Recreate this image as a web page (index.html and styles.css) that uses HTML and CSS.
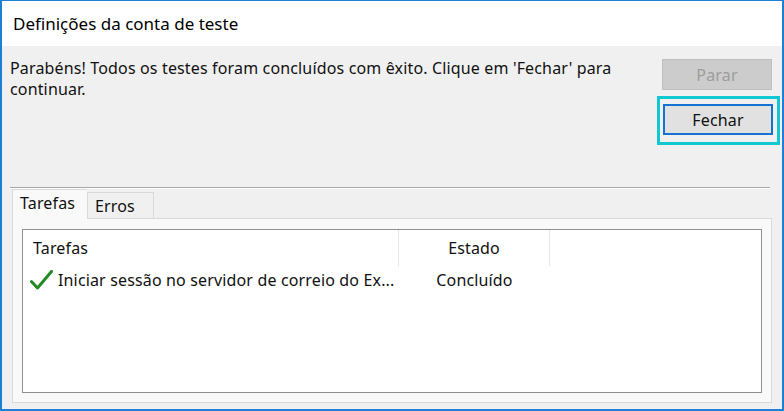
FILE: index.html
```html
<!DOCTYPE html>
<html lang="pt">
<head>
<meta charset="utf-8">
<title>Definições da conta de teste</title>
<link rel="stylesheet" href="styles.css">
</head>
<body>
<div class="window">
  <div class="titlebar">Definições da conta de teste</div>
  <div class="content">
    <div class="top">
      <p class="message">Parabéns! Todos os testes foram concluídos com êxito. Clique em 'Fechar' para continuar.</p>
      <div class="buttons">
        <button class="btn btn-disabled" disabled>Parar</button>
        <div class="highlight">
          <button class="btn btn-default">Fechar</button>
        </div>
      </div>
    </div>
    <div class="separator"></div>
    <div class="tabs">
      <div class="tab tab-active">Tarefas</div>
      <div class="tab">Erros</div>
    </div>
    <div class="panel">
      <div class="list">
        <div class="list-header">
          <div class="col col-task">Tarefas</div>
          <div class="col col-state">Estado</div>
          <div class="col col-rest"></div>
        </div>
        <div class="list-row">
          <div class="col col-task">
            <svg class="check" width="23" height="20" viewBox="0 0 23 20"><path d="M1.5 11.5 L7.5 18 L21.5 1.5" fill="none" stroke="#238a23" stroke-width="3" stroke-linecap="round" stroke-linejoin="round"/></svg>
            <span>Iniciar sessão no servidor de correio do Ex...</span>
          </div>
          <div class="col col-state">Concluído</div>
        </div>
      </div>
    </div>
  </div>
</div>
</body>
</html>
```
FILE: styles.css
```css
html, body {
  margin: 0;
  padding: 0;
  background: #ffffff;
}
body {
  font-family: "Noto Sans", "Open Sans", sans-serif;
  color: #111111;
}
.window {
  width: 784px;
  height: 411px;
  box-sizing: border-box;
  border-left: 2px solid #1f7fd4;
  border-right: 2px solid #1f7fd4;
  border-bottom: 2px solid #1f7fd4;
  border-top: 1px solid #1f7fd4;
  display: flex;
  flex-direction: column;
  overflow: hidden;
}
.titlebar {
  height: 45px;
  background: #ffffff;
  font-size: 17px;
  line-height: 45px;
  padding-left: 11px;
  color: #000;
  flex: none;
}
.content {
  flex: 1;
  background: #f0f0f0;
  display: flex;
  flex-direction: column;
}
.top {
  display: flex;
  height: 140px;
  flex: none;
}
.message {
  flex: 1;
  margin: 0;
  padding: 12px 30px 0 8px;
  font-size: 16px;
  letter-spacing: 0.15px;
  line-height: 21px;
}
.buttons {
  width: 123px;
  margin-right: 2px;
  display: flex;
  flex-direction: column;
  align-items: flex-start;
  padding-top: 13px;
  box-sizing: border-box;
}
.btn {
  width: 110px;
  height: 31px;
  font-family: inherit;
  font-size: 16px;
  letter-spacing: 0.15px;
  padding: 0;
  box-sizing: border-box;
  border-radius: 0;
}
.btn-disabled {
  margin-left: 5px;
  background: #cccccc;
  border: 1px solid #bfbfbf;
  color: #9d9d9d;
}
.highlight {
  margin-top: 6px;
  width: 123px;
  height: 49px;
  box-sizing: border-box;
  border: 3px solid #12c8d0;
  padding: 5px 0 0 3px;
}
.btn-default {
  background: #e1e1e1;
  border: 2px solid #1473d2;
  color: #111111;
}
.separator {
  margin: 1px 12px 0 8px;
  height: 1px;
  background: #a8a8a8;
  border-bottom: 1px solid #ffffff;
  flex: none;
}
.tabs {
  display: flex;
  align-items: flex-end;
  padding-left: 10px;
  height: 29px;
  flex: none;
}
.tab {
  font-size: 16px;
  letter-spacing: 0.15px;
  box-sizing: border-box;
  height: 26px;
  width: 67px;
  border: 1px solid #d9d9d9;
  border-bottom: none;
  background: #f0f0f0;
  padding-left: 7px;
  line-height: 26px;
}
.tab-active {
  height: 30px;
  width: 75px;
  background: #f9f9f9;
  border-right: none;
  padding-left: 7px;
  line-height: 26px;
  position: relative;
  z-index: 1;
  margin-bottom: -1px;
}
.panel {
  margin: 0 10px;
  height: 185px;
  box-sizing: border-box;
  border: 1px solid #d9d9d9;
  background: #f9f9f9;
  padding: 10px 9px;
  flex: none;
}
.list {
  height: 164px;
  box-sizing: border-box;
  border: 1px solid #8f8f8f;
  background: #ffffff;
  font-size: 16px;
  letter-spacing: 0.15px;
}
.list-header {
  display: flex;
  height: 36px;
}
.list-header .col {
  border-right: 1px solid #e5e5e5;
  line-height: 36px;
}
.col-task {
  width: 376px;
  box-sizing: border-box;
  padding-left: 10px;
}
.col-state {
  width: 151px;
  text-align: center;
  box-sizing: border-box;
}
.list-header .col-rest {
  border-right: none;
}
.list-row {
  display: flex;
  height: 28px;
  align-items: center;
}
.list-row .col-task {
  display: flex;
  align-items: center;
  padding-left: 7px;
  gap: 5px;
  white-space: nowrap;
}
.check {
  flex: none;
}
```
